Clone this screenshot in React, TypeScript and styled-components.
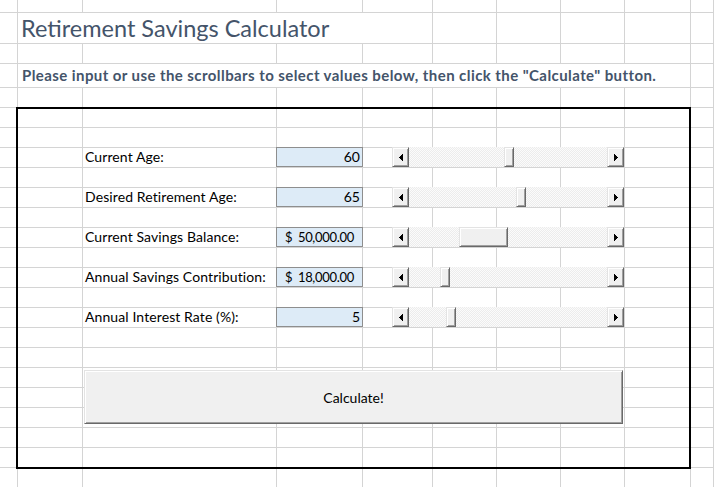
import React from "react";
import styled, { createGlobalStyle } from "styled-components";

const GlobalStyle = createGlobalStyle`
  html, body {
    margin: 0;
    padding: 0;
    background: #ffffff;
    overflow: hidden;
  }
  body {
    font-family: Lato, "Open Sans", sans-serif;
  }
`;

// column widths / row heights of the sheet (gridline is the last pixel of each track)
const COLS = "18px 65px 194px 86px 70px 64px 64px 64px 66px 23px";
const ROWS = "13px 31px 20px 24px 20px repeat(19, 20px)";
const COL_COUNT = 10;
const ROW_COUNT = 24;

type Field = {
  label: string;
  value: string;
  money?: boolean;
  thumb: number;
  thumbWidth: number;
};

const fields: Field[] = [
  { label: "Current Age:", value: "60", thumb: 95, thumbWidth: 10 },
  { label: "Desired Retirement Age:", value: "65", thumb: 107, thumbWidth: 10 },
  { label: "Current Savings Balance:", value: "50,000.00", money: true, thumb: 50, thumbWidth: 49 },
  { label: "Annual Savings Contribution:", value: "18,000.00", money: true, thumb: 31, thumbWidth: 10 },
  { label: "Annual Interest Rate (%):", value: "5", thumb: 37, thumbWidth: 10 },
];

const FIRST_FIELD_ROW = 7;

const Sheet = styled.div`
  display: grid;
  width: 714px;
  height: 487px;
  overflow: hidden;
`;

const Layer = styled.div`
  grid-area: 1 / 1;
  display: grid;
  grid-template-columns: ${COLS};
  grid-template-rows: ${ROWS};
`;

const ControlLayer = styled(Layer)`
  pointer-events: none;
  & > * {
    pointer-events: auto;
  }
`;

const Cell = styled.div<{ $span?: number }>`
  grid-column: span ${(p) => p.$span ?? 1};
  box-sizing: border-box;
  border-right: 1px solid #d4d4d4;
  border-bottom: 1px solid #d4d4d4;
  display: flex;
  align-items: flex-end;
  min-width: 0;
  white-space: nowrap;
`;

const Title = styled.span`
  font-family: Lato, sans-serif;
  font-weight: 400;
  font-size: 23.5px;
  line-height: 24px;
  color: #44546a;
  padding: 0 0 3px 3px;
`;

const Heading = styled.span`
  font-family: Lato, sans-serif;
  font-weight: 700;
  font-size: 15px;
  letter-spacing: 0.42px;
  line-height: 17px;
  color: #44546a;
  padding: 0 0 3px 4px;
`;

const Label = styled.span`
  font-family: Lato, sans-serif;
  font-size: 14px;
  letter-spacing: 0.1px;
  line-height: 16px;
  color: #000000;
  padding: 0 0 2px 2px;
`;

const Input = styled.div<{ $money?: boolean }>`
  flex: none;
  align-self: flex-start;
  box-sizing: border-box;
  width: calc(100% + 2px);
  height: calc(100% + 1px);
  margin: -1px -1px 0 -1px;
  background: #ddebf7;
  border: 1px solid #8e8e8e;
  display: flex;
  align-items: flex-end;
  justify-content: ${(p) => (p.$money ? "space-between" : "flex-end")};
  padding: ${(p) => (p.$money ? "0 8px 1px 8px" : "0 2px 1px 0")};
  font-family: Lato, sans-serif;
  font-size: ${(p) => (p.$money ? "13px" : "14px")};
  letter-spacing: ${(p) => (p.$money ? "-0.3px" : "0")};
  line-height: 16px;
  color: #000000;
`;

const Frame = styled.div`
  grid-column: 2 / 10;
  grid-row: 6 / 24;
  margin: -1px 0 -1px -2px;
  border: 2px solid #000000;
  pointer-events: none;
`;

const raised = `
  box-sizing: border-box;
  background: #f0f0f0;
  border: 1px solid;
  border-color: #e3e3e3 #696969 #696969 #e3e3e3;
  box-shadow: inset 1px 1px #ffffff, inset -1px -1px #a0a0a0;
`;

const ScrollBar = styled.div<{ $row: number }>`
  grid-column: 5 / 9;
  grid-row: ${(p) => p.$row};
  margin: -1px 1px 1px 29px;
  display: flex;
`;

const ArrowButton = styled.button`
  ${raised}
  flex: none;
  width: 17px;
  height: 100%;
  padding: 0;
  display: flex;
  align-items: center;
  justify-content: center;
  cursor: default;
`;

const Track = styled.div`
  flex: 1;
  display: flex;
  background: repeating-conic-gradient(#ececec 0 25%, #fbfbfb 0 50%) 0 0 / 2px 2px;
`;

const Thumb = styled.div<{ $offset: number; $width: number }>`
  ${raised}
  flex: none;
  height: 100%;
  width: ${(p) => p.$width}px;
  margin-left: ${(p) => p.$offset}px;
`;

const CalcButton = styled.button`
  ${raised}
  grid-column: 3 / 9;
  grid-row: 19 / 22;
  margin: 2px 2px 4px 1px;
  font-family: Lato, sans-serif;
  font-size: 14px;
  color: #000000;
  padding: 0;
  cursor: default;
`;

const Arrow = ({ dir }: { dir: "left" | "right" }) => (
  <svg width="4" height="7" viewBox="0 0 4 7" shapeRendering="crispEdges">
    {[0, 1, 2, 3].map((i) => {
      const x = dir === "left" ? i : 3 - i;
      return <rect key={i} x={x} y={3 - i} width="1" height={i * 2 + 1} fill="#000" />;
    })}
  </svg>
);

type CellSpec = { span?: number; content?: React.ReactNode };

const blankRow = (): CellSpec[] => Array.from({ length: COL_COUNT }, () => ({}));

const buildRows = (): CellSpec[][] => {
  const rows = Array.from({ length: ROW_COUNT }, blankRow);
  rows[1] = [
    {},
    { span: 4, content: <Title>Retirement Savings Calculator</Title> },
    {}, {}, {}, {}, {},
  ];
  rows[3] = [
    {},
    {
      span: 8,
      content: (
        <Heading>
          Please input or use the scrollbars to select values below, then click the "Calculate" button.
        </Heading>
      ),
    },
    {},
  ];
  fields.forEach((f, i) => {
    const r = rows[FIRST_FIELD_ROW + i * 2];
    r[2] = { content: <Label>{f.label}</Label> };
    r[3] = {
      content: f.money ? (
        <Input $money>
          <span>$</span>
          <span>{f.value}</span>
        </Input>
      ) : (
        <Input>{f.value}</Input>
      ),
    };
  });
  return rows;
};

const rows = buildRows();

export default function App() {
  return (
    <>
      <GlobalStyle />
      <Sheet>
        <Layer>
          {rows.map((row, r) =>
            row.map((cell, c) => (
              <Cell key={`${r}-${c}`} $span={cell.span}>
                {cell.content}
              </Cell>
            ))
          )}
        </Layer>
        <ControlLayer>
          <Frame />
          {fields.map((f, i) => (
            <ScrollBar key={f.label} $row={FIRST_FIELD_ROW + i * 2 + 1}>
              <ArrowButton aria-label="decrease">
                <Arrow dir="left" />
              </ArrowButton>
              <Track>
                <Thumb $offset={f.thumb} $width={f.thumbWidth} />
              </Track>
              <ArrowButton aria-label="increase">
                <Arrow dir="right" />
              </ArrowButton>
            </ScrollBar>
          ))}
          <CalcButton>Calculate!</CalcButton>
        </ControlLayer>
      </Sheet>
    </>
  );
}
